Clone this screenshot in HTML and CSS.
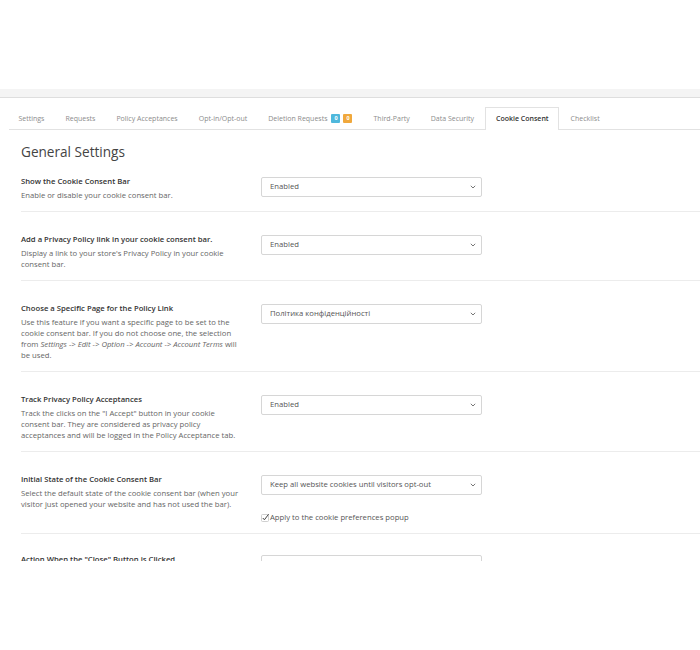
FILE: index.html
```html
<!DOCTYPE html>
<html lang="en">
<head>
<meta charset="utf-8">
<title>Cookie Consent</title>
<link rel="stylesheet" href="styles.css">
</head>
<body>
<div class="top"></div>
<div class="band"></div>
<div class="panel">
  <ul class="tabs">
    <li class="tab">Settings</li>
    <li class="tab">Requests</li>
    <li class="tab">Policy Acceptances</li>
    <li class="tab">Opt-in/Opt-out</li>
    <li class="tab">Deletion Requests <span class="badge badge-info">0</span><span class="badge badge-warn">0</span></li>
    <li class="tab">Third-Party</li>
    <li class="tab">Data Security</li>
    <li class="tab active">Cookie Consent</li>
    <li class="tab">Checklist</li>
  </ul>
  <div class="content">
    <h2 class="title">General Settings</h2>

    <div class="row first">
      <div class="info">
        <div class="label">Show the Cookie Consent Bar</div>
        <div class="desc">Enable or disable your cookie consent bar.</div>
      </div>
      <div class="control">
        <div class="select"><span>Enabled</span><svg class="chev" width="6" height="4" viewBox="0 0 6 4"><path d="M0.8 0.8 L3 3 L5.2 0.8" fill="none" stroke="#666" stroke-width="0.9"/></svg></div>
      </div>
    </div>

    <div class="row">
      <div class="info">
        <div class="label">Add a Privacy Policy link in your cookie consent bar.</div>
        <div class="desc">Display a link to your store's Privacy Policy in your cookie consent bar.</div>
      </div>
      <div class="control">
        <div class="select"><span>Enabled</span><svg class="chev" width="6" height="4" viewBox="0 0 6 4"><path d="M0.8 0.8 L3 3 L5.2 0.8" fill="none" stroke="#666" stroke-width="0.9"/></svg></div>
      </div>
    </div>

    <div class="row">
      <div class="info">
        <div class="label">Choose a Specific Page for the Policy Link</div>
        <div class="desc">Use this feature if you want a specific page to be set to the cookie consent bar. If you do not choose one, the selection from <em>Settings -&gt; Edit -&gt; Option -&gt; Account -&gt; Account Terms</em> will be used.</div>
      </div>
      <div class="control">
        <div class="select"><span>Політика конфіденційності</span><svg class="chev" width="6" height="4" viewBox="0 0 6 4"><path d="M0.8 0.8 L3 3 L5.2 0.8" fill="none" stroke="#666" stroke-width="0.9"/></svg></div>
      </div>
    </div>

    <div class="row">
      <div class="info">
        <div class="label">Track Privacy Policy Acceptances</div>
        <div class="desc">Track the clicks on the "I Accept" button in your cookie consent bar. They are considered as privacy policy acceptances and will be logged in the Policy Acceptance tab.</div>
      </div>
      <div class="control">
        <div class="select"><span>Enabled</span><svg class="chev" width="6" height="4" viewBox="0 0 6 4"><path d="M0.8 0.8 L3 3 L5.2 0.8" fill="none" stroke="#666" stroke-width="0.9"/></svg></div>
      </div>
    </div>

    <div class="row">
      <div class="info">
        <div class="label">Initial State of the Cookie Consent Bar</div>
        <div class="desc">Select the default state of the cookie consent bar (when your visitor just opened your website and has not used the bar).</div>
      </div>
      <div class="control">
        <div class="select"><span>Keep all website cookies until visitors opt-out</span><svg class="chev" width="6" height="4" viewBox="0 0 6 4"><path d="M0.8 0.8 L3 3 L5.2 0.8" fill="none" stroke="#666" stroke-width="0.9"/></svg></div>
        <div class="check"><svg width="9" height="9" viewBox="0 0 9 9"><rect x="0.5" y="1.5" width="7" height="7" rx="1" fill="#fff" stroke="#c4c4c4" stroke-width="0.8"/><path d="M1.8 5 L3.4 6.8 L7.6 1.2" fill="none" stroke="#444" stroke-width="1"/></svg><span>Apply to the cookie preferences popup</span></div>
      </div>
    </div>

    <div class="row last">
      <div class="info">
        <div class="label">Action When the "Close" Button is Clicked</div>
      </div>
      <div class="control">
        <div class="select"><span></span><svg class="chev" width="6" height="4" viewBox="0 0 6 4"><path d="M0.8 0.8 L3 3 L5.2 0.8" fill="none" stroke="#666" stroke-width="0.9"/></svg></div>
      </div>
    </div>
  </div>
</div>
</body>
</html>
```

FILE: styles.css
```css
* { box-sizing: border-box; }

html, body {
  margin: 0;
  padding: 0;
  background: #fff;
}

body {
  font-family: "Open Sans", "Noto Sans", "DejaVu Sans", sans-serif;
  font-size: 7.7px;
  line-height: 11px;
  color: #555;
}

.top {
  height: 89px;
  background: #fff;
}

.band {
  height: 9px;
  background: #f4f4f4;
  border-bottom: 1px solid #dedede;
}

.panel {
  height: 463px;
  overflow: hidden;
  background: #fff;
}

.tabs {
  list-style: none;
  margin: 9px 0 0 9px;
  padding: 0;
  display: flex;
  border-bottom: 1px solid #e2e2e2;
  font-size: 7px;
}

.tab {
  height: 22px;
  padding: 0 8.5px;
  margin-right: 2px;
  margin-bottom: -1px;
  display: flex;
  align-items: center;
  color: #8c8c8c;
  border: 1px solid transparent;
  border-bottom: none;
  white-space: nowrap;
}

.tab.active {
  background: #fff;
  border-color: #e2e2e2;
  color: #333;
  font-weight: 600;
  height: 23px;
  padding: 0 9.5px 1px;
}

.badge {
  display: inline-flex;
  align-items: center;
  justify-content: center;
  width: 9px;
  height: 9px;
  border-radius: 1px;
  color: #fff;
  font-size: 5.5px;
  font-weight: 700;
  line-height: 9px;
}

.badge-info {
  background: #4fb8dc;
  margin-left: 4px;
}

.badge-warn {
  background: #f0a83c;
  margin-left: 3px;
}

.content {
  padding-left: 21px;
}

.title {
  margin: 13px 0 0 0;
  font-size: 13.6px;
  line-height: 18px;
  font-weight: 400;
  color: #444;
}

.row {
  display: grid;
  grid-template-columns: 220px 221px;
  column-gap: 20px;
  padding: 21.5px 0 10.5px 0;
  border-bottom: 1px solid #ececec;
}

.row.first {
  padding-top: 14.5px;
}

.row.last {
  padding-top: 20px;
}

.label {
  font-weight: 600;
  color: #333;
}

.desc {
  margin-top: 3px;
  color: #666;
}

.control {
  padding-top: 1px;
}

.select {
  height: 20px;
  border: 1px solid #d6d6d6;
  border-radius: 2px;
  display: flex;
  align-items: center;
  justify-content: space-between;
  padding: 0 5px 0 8px;
  color: #555;
  background: #fff;
}

.chev {
  display: block;
}

.check {
  margin-top: 17px;
  display: flex;
  align-items: center;
  color: #555;
}

.check svg {
  display: block;
}
```
